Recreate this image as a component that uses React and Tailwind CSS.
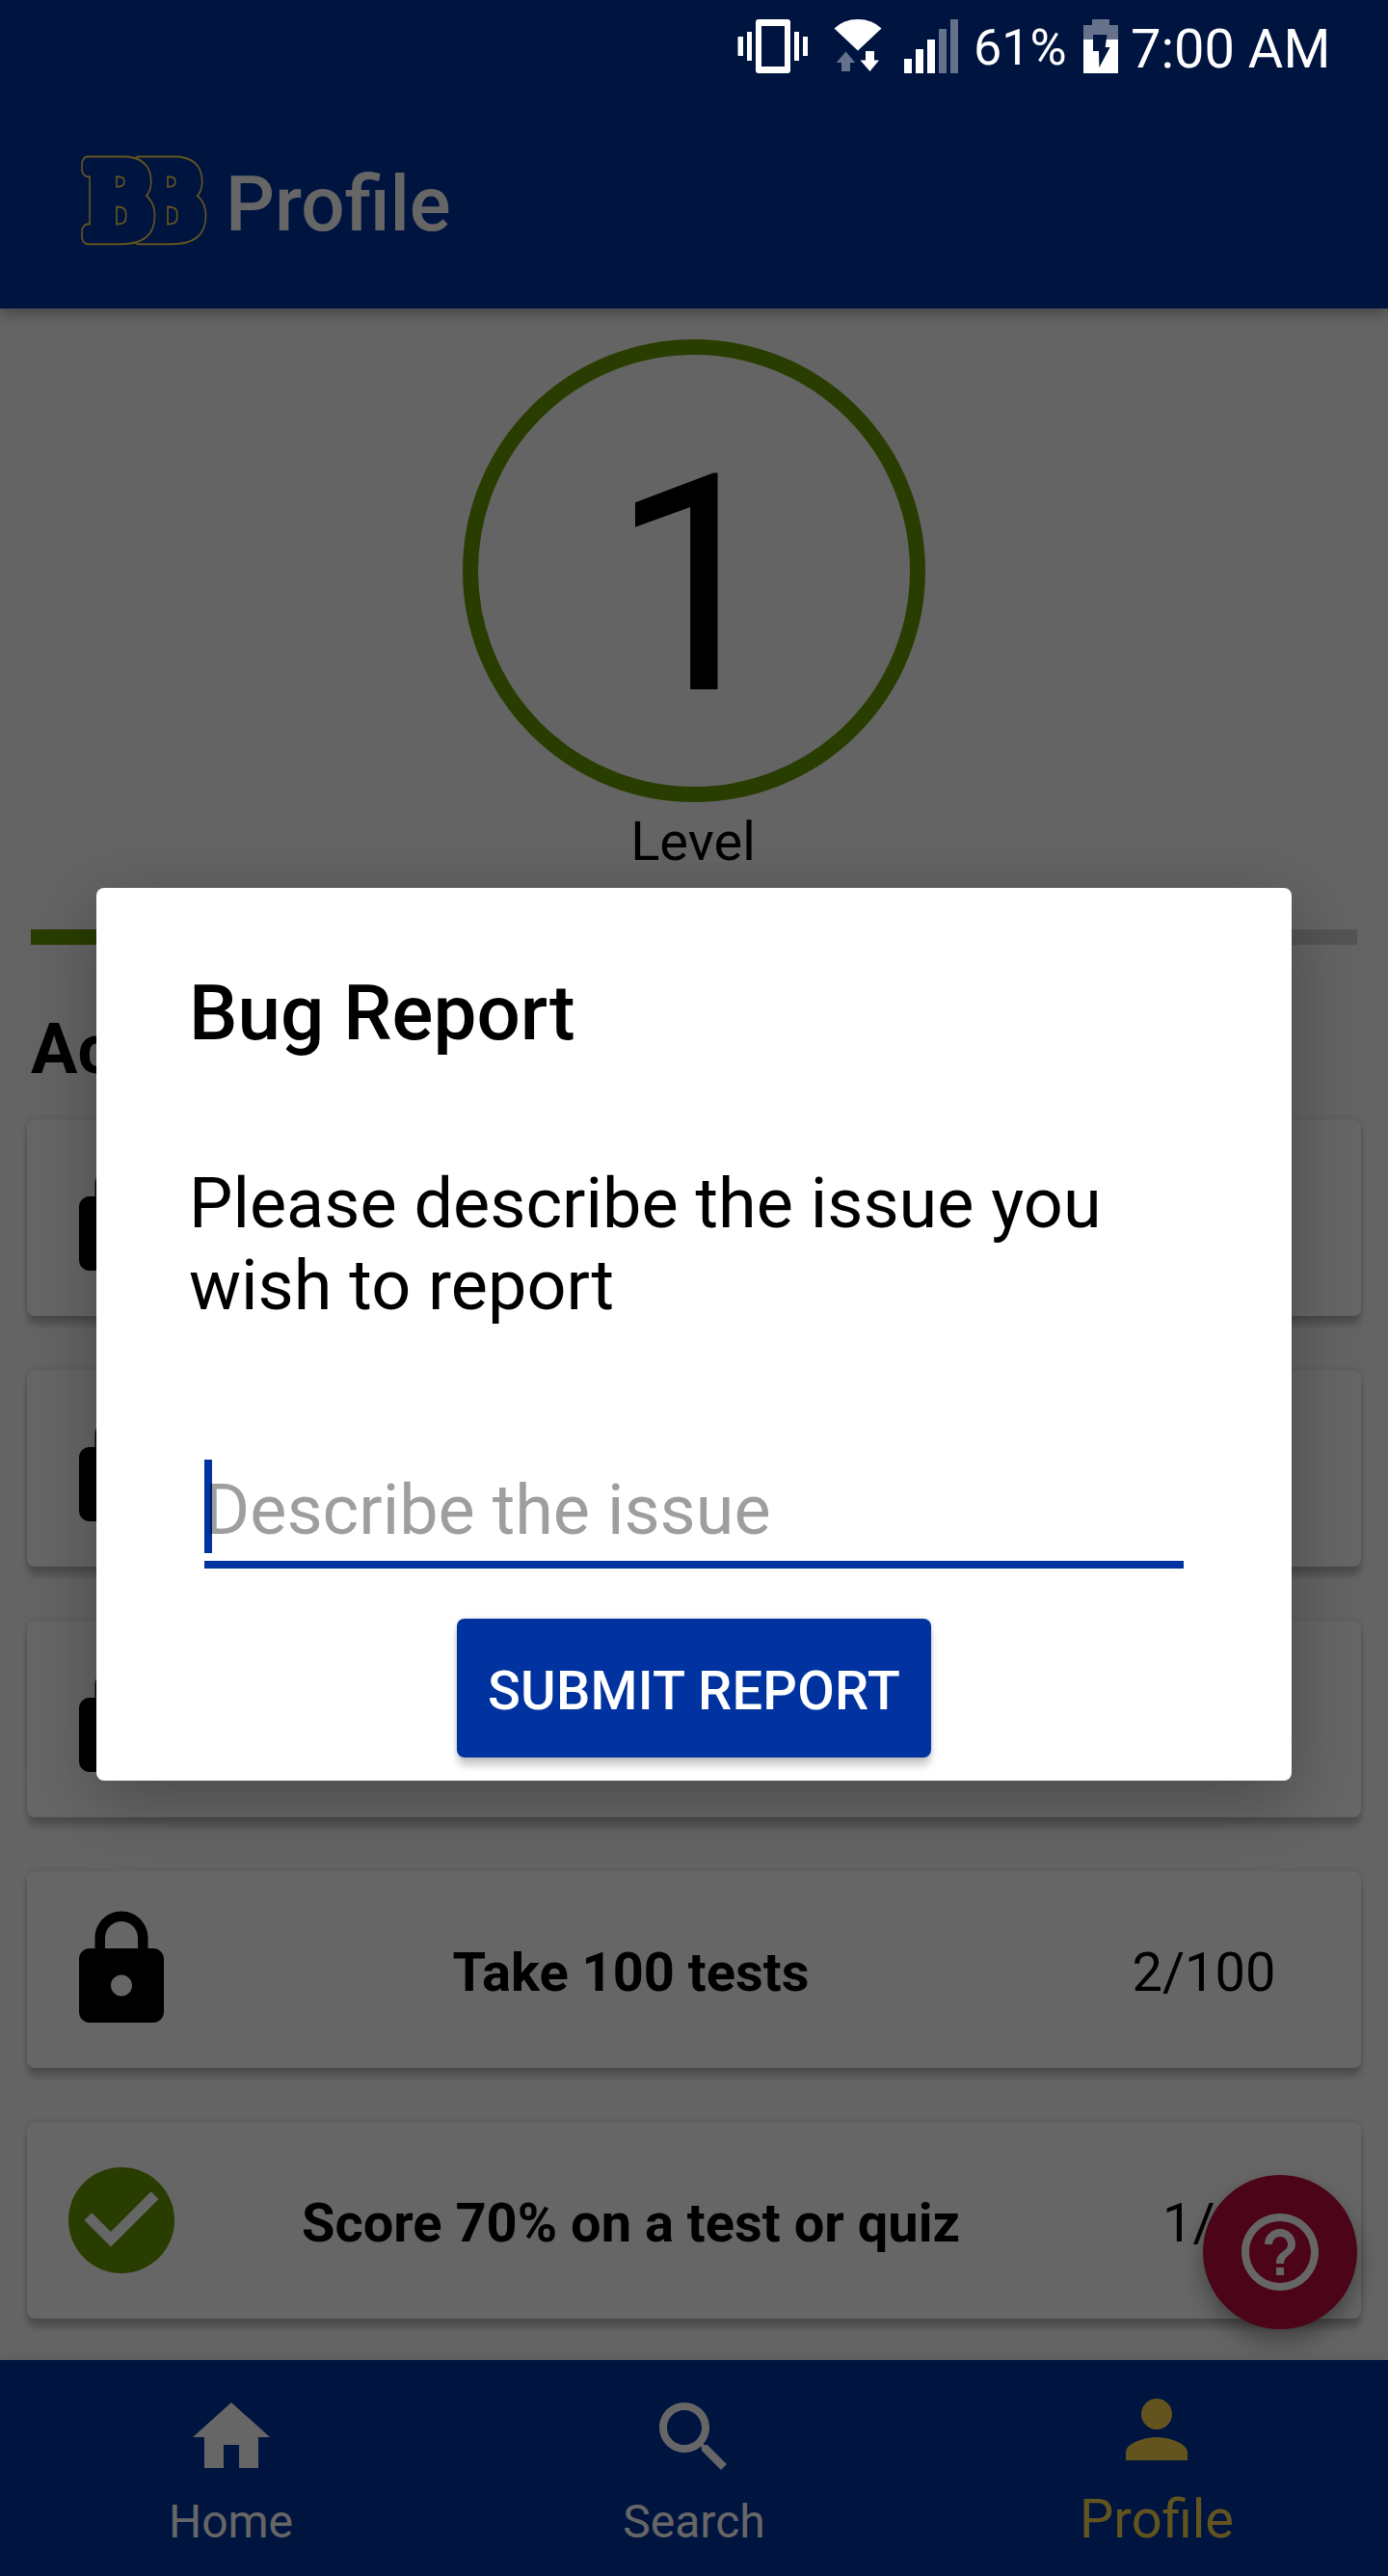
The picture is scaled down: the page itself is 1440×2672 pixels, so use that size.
import React from "react";

const ICONS = {
  lock: "M18 8h-1V6c0-2.76-2.24-5-5-5S7 3.24 7 6v2H6c-1.1 0-2 .9-2 2v10c0 1.1.9 2 2 2h12c1.1 0 2-.9 2-2V10c0-1.1-.9-2-2-2zm-6 9c-1.1 0-2-.9-2-2s.9-2 2-2 2 .9 2 2-.9 2-2 2zm3.1-9H8.9V6c0-1.71 1.39-3.1 3.1-3.1 1.71 0 3.1 1.39 3.1 3.1v2z",
  check:
    "M12 2C6.48 2 2 6.48 2 12s4.48 10 10 10 10-4.48 10-10S17.52 2 12 2zm-2 15l-5-5 1.41-1.41L10 14.17l7.59-7.59L19 8l-9 9z",
  help: "M11 18h2v-2h-2v2zm1-16C6.48 2 2 6.48 2 12s4.48 10 10 10 10-4.48 10-10S17.52 2 12 2zm0 18c-4.41 0-8-3.59-8-8s3.59-8 8-8 8 3.59 8 8-3.59 8-8 8zm0-14c-2.21 0-4 1.79-4 4h2c0-1.1.9-2 2-2s2 .9 2 2c0 2-3 1.75-3 5h2c0-2.25 3-2.5 3-5 0-2.21-1.79-4-4-4z",
  home: "M10 20v-6h4v6h5v-8h3L12 3 2 12h3v8z",
  search:
    "M15.5 14h-.79l-.28-.27C15.41 12.59 16 11.11 16 9.5 16 5.91 13.09 3 9.5 3S3 5.91 3 9.5 5.91 16 9.5 16c1.61 0 3.09-.59 4.23-1.57l.27.28v.79l5 4.99L20.49 19l-4.99-5zm-6 0C7.01 14 5 11.99 5 9.5S7.01 5 9.5 5 14 7.01 14 9.5 11.99 14 9.5 14z",
  person:
    "M12 12c2.21 0 4-1.79 4-4s-1.79-4-4-4-4 1.79-4 4 1.79 4 4 4zm0 2c-2.67 0-8 1.34-8 4v2h16v-2c0-2.66-5.33-4-8-4z",
};

function Icon({ name, className }) {
  return (
    <svg viewBox="0 0 24 24" fill="currentColor" className={className} aria-hidden="true">
      <path d={ICONS[name]} />
    </svg>
  );
}

function StatusBar() {
  return (
    <div className="relative z-20 flex h-24 items-center pl-[765px] text-white">
      <svg className="h-14 w-[73px] shrink-0" viewBox="0 0 73 56" fill="currentColor">
        <path
          fillRule="evenodd"
          d="M22 0h30a3 3 0 0 1 3 3v50a3 3 0 0 1-3 3H22a3 3 0 0 1-3-3V3a3 3 0 0 1 3-3zM25 7v42h24V7z"
        />
        <path d="M0.500 18h5.500v20h-5.500zM10 13h5v30h-5zM59 13h5v30h-5zM68 18h5v20h-5z" />
      </svg>
      <svg className="ml-[27px] h-14 w-[50px] shrink-0" viewBox="0 0 50 56" fill="currentColor">
        <path d="M25 32.500L0.500 9.500Q10 0 25 0T49.500 9.500z" />
        <path d="M12.500 33.500l9.700 11.500h-5.200v9h-9v-9H2.700z" opacity=".4" />
        <path d="M33 33h9v9.500h5L37.500 54 27.500 42.500H33z" />
      </svg>
      <svg className="ml-[23px] h-14 w-14 shrink-0" viewBox="0 0 56 56" fill="currentColor">
        <path d="M0 41h8v15H0zM12 31h8v25h-8zM24 21h8v35h-8z" />
        <path d="M36 10h8v46h-8zM48 0h8v56h-8z" opacity=".4" />
      </svg>
      <span className="ml-4 w-[114px] shrink-0 pt-1 text-[52px] leading-none">61%</span>
      <svg className="h-14 w-9 shrink-0" viewBox="0 0 36 56">
        <path d="M9 0h18v6h9v15H0V6h9z" fill="#fff" opacity=".4" />
        <path d="M0 21h36v35H0z" fill="#fff" />
        <path d="M10 16h14.500l-1.800 13h4.900L16.400 50 16 33h-6z" fill="#001440" />
      </svg>
      <span className="ml-[13px] whitespace-nowrap pt-1.5 text-[56px] leading-none">7:00 AM</span>
    </div>
  );
}

// One outlined slab letter: a gold silhouette with a slightly thinner blue one over it.
function LogoLetter({ x }) {
  return (
    <g transform={`translate(${x} 85) scale(0.815 1)`} strokeLinejoin="round" fontSize="105">
      <text stroke="#f7d24e" strokeWidth="16.500" fill="#f7d24e">
        B
      </text>
      <text stroke="#0033a0" strokeWidth="12.500" fill="#0033a0">
        B
      </text>
    </g>
  );
}

function Logo() {
  return (
    <svg
      className="h-[94px] w-[140px] shrink-0 overflow-visible font-['DejaVu_Serif'] font-bold"
      viewBox="0 0 140 94"
      aria-label="BB"
    >
      <LogoLetter x={57} />
      <LogoLetter x={4} />
    </svg>
  );
}

function AchievementCard({ done, title, count }) {
  return (
    <div className="grid h-[204px] shrink-0 grid-cols-[132px_925px_263px] items-center rounded-lg bg-white px-8 text-center text-[56px] leading-[66px] shadow-[0_10px_7px_-1px_rgba(0,0,0,0.22),0_0_6px_rgba(0,0,0,0.14)]">
      <Icon
        name={done ? "check" : "lock"}
        className={done ? "size-[132px] text-[#669900]" : "size-[132px] text-black"}
      />
      <span className="pt-1.5 font-bold">{title}</span>
      <span className="pl-px pt-1.5">{count}</span>
    </div>
  );
}

const achievements = [
  { id: 1 },
  { id: 2 },
  { id: 3 },
  { id: 4, title: "Take 100 tests", count: "2/100" },
  { id: 5, title: "Score 70% on a test or quiz", count: "1/1", done: true },
];

function BugReportDialog() {
  return (
    <div className="absolute inset-x-[100px] top-[921px] z-20 flex h-[926px] flex-col rounded-lg bg-white px-24 pt-[83px] shadow-[0_20px_70px_rgba(0,0,0,0.28)]">
      <h2 className="text-[80px] font-medium leading-[94px]">Bug Report</h2>
      <p className="mt-[109px] text-[72px] leading-[84.500px]">
        Please describe the issue you
        <br />
        wish to report
      </p>
      <div className="relative mx-4 mt-[138px] h-[113px] border-b-8 border-[#0033a0] pt-[11px] text-[72px] leading-[84px]">
        <span className="absolute left-0 top-0 h-[97px] w-2 bg-[#0033a0]" />
        <span className="relative text-black/38">Describe the issue</span>
      </div>
      <button className="mt-[52px] h-36 w-[492px] self-center rounded-lg bg-[#0033a0] pt-1.5 text-[56px] font-medium leading-[66px] tracking-[0.2px] text-white shadow-[0_9px_8px_-1px_rgba(0,0,0,0.22),0_0_5px_rgba(0,0,0,0.14)]">
        SUBMIT REPORT
      </button>
    </div>
  );
}

export default function App() {
  return (
    <div className="relative flex h-[2672px] w-[1440px] flex-col overflow-hidden bg-[#fafafa] font-['Roboto',sans-serif] text-black">
      <div className="flex h-80 shrink-0 flex-col bg-[#0033a0] shadow-[0_4px_16px_rgba(0,0,0,0.35)]">
        <StatusBar />
        <div className="flex h-56 items-center pl-[83px]">
          <Logo />
          <h1 className="ml-[11px] pt-2 text-[80px] font-medium leading-[94px] text-white">Profile</h1>
        </div>
      </div>

      <main className="flex h-[2128px] shrink-0 flex-col px-7 pt-8">
        <div className="flex size-[480px] items-center justify-center self-center rounded-full border-16 border-[#669900] pl-0.5 pt-[31px] text-[314px] leading-none">
          1
        </div>
        <p className="mt-2 pr-0.5 text-center text-[56px] leading-[66px]">Level</p>
        <div className="mx-1 mt-[58px] h-4 bg-[#d3d3d3]">
          <div className="h-4 w-1/3 bg-[#669900]" />
        </div>
        <h2 className="mx-1 mt-[67px] text-[72px] font-bold leading-[84px]">Achievements</h2>
        <div className="mt-[30px] flex flex-col gap-14">
          {achievements.map((item) => (
            <AchievementCard key={item.id} {...item} />
          ))}
        </div>
      </main>

      <button className="absolute bottom-64 right-8 flex size-40 items-center justify-center rounded-full bg-[#be0a3c] text-white shadow-[0_12px_24px_rgba(0,0,0,0.35)]">
        <Icon name="help" className="size-24" />
      </button>

      <nav className="relative grid h-56 shrink-0 grid-cols-3 bg-[#0033a0] text-[48px] leading-[56px] text-white shadow-[0_0_16px_rgba(0,0,0,0.12)]">
        <div className="flex flex-col items-center pt-8">
          <Icon name="home" className="size-24" />
          <span className="mt-3 pr-px">Home</span>
        </div>
        <div className="flex flex-col items-center pt-8">
          <Icon name="search" className="size-24" />
          <span className="mt-3">Search</span>
        </div>
        <div className="flex flex-col items-center pt-6 text-[#f7d24e]">
          <Icon name="person" className="size-24" />
          <span className="mt-3 text-[56px] leading-[66px]">Profile</span>
        </div>
      </nav>

      <div className="absolute inset-0 z-10 bg-black/60" />
      <BugReportDialog />
    </div>
  );
}
